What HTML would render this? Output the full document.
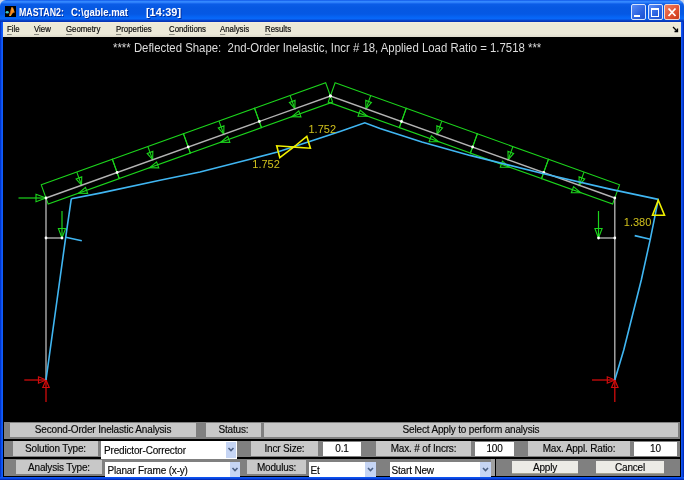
<!DOCTYPE html>
<html><head><meta charset="utf-8">
<style>
html{background:#c8d4ec;}
html,body{margin:0;padding:0;}
.gs{will-change:transform;}
body{width:684px;height:480px;overflow:hidden;position:relative;will-change:transform;background:transparent;font-family:"Liberation Sans",sans-serif;}
.a{position:absolute;}
#title{left:0;top:0;width:684px;height:22px;border-radius:6px 6px 0 0;background:linear-gradient(to bottom,#0c4ee0 0px,#2a80ff 1px,#3c90ff 2px,#1e6ef4 3px,#0a5ce6 4.5px,#0658e2 8px,#0558e4 14px,#0664f4 17px,#0868fa 19px,#0848d0 20px,#0636b8 21.5px,#0a3cc0 22px);}
.tt{top:6px;color:#fff;font-weight:bold;font-size:10.5px;line-height:12px;transform-origin:0 0;white-space:pre;text-shadow:1px 1px 0 #0030a0;}
#menu{left:3px;top:22px;width:678px;height:15px;background:linear-gradient(to bottom,#f6eedd 0px,#ece9d8 2px,#ece9d8 12px,#dedbcd 15px);}
.mi{top:23.5px;font-size:8.8px;line-height:11px;color:#000;white-space:pre;transform:scaleX(0.89);transform-origin:0 0;}
.mi u{text-decoration:underline;text-decoration-color:#8a8a80;text-underline-offset:1.5px;}
#plot{left:4px;top:37px;width:676px;height:384px;background:#000;}
#panel{left:3px;top:421px;width:678px;height:56px;background:#000;}
.fr{background:#808080;}
.bt{background:#c8c8c8;color:#111;font-size:10px;letter-spacing:-0.17px;text-align:center;white-space:pre;overflow:hidden;}
.ed{background:#fff;color:#111;font-size:10px;letter-spacing:-0.17px;text-align:center;white-space:pre;overflow:hidden;}
.pp{background:#fff;color:#111;font-size:10px;letter-spacing:-0.17px;text-align:left;white-space:pre;overflow:hidden;}
.ar{background:#c6d5f4;}
.xb{background:#ecebe6;color:#111;font-size:10px;letter-spacing:-0.17px;text-align:center;white-space:pre;border-bottom:1px solid #a4a290;}
svg{position:absolute;left:0;top:0;}
.bt,.ed,.pp,.xb{color:#000;-webkit-text-stroke:0.15px #222;}
.mi{-webkit-text-stroke:0.2px #222;}
</style></head><body>
<div class="a" style="left:0;top:8px;width:3px;height:472px;background:linear-gradient(to right,#0028b8,#0a50f0 50%,#1462ff);"></div>
<div class="a" style="left:681px;top:8px;width:3px;height:472px;background:linear-gradient(to left,#0020a8,#0846e0 50%,#1058f8);"></div>
<div class="a" style="left:0;top:477px;width:684px;height:3px;background:linear-gradient(to top,#0020a8,#0846e0 50%,#1058f8);"></div>
<div class="a" style="left:3px;top:37px;width:678px;height:440px;background:#000;"></div>
<div class="a" id="title"></div>
<div class="a" style="left:5px;top:6px;width:11px;height:11px;background:#000;"></div>
<svg width="684" height="480" style="pointer-events:none">
<ellipse cx="7.2" cy="12.2" rx="1.6" ry="1.2" fill="#40c8c8"/>
<polygon points="11.5,7 13,7.5 14.8,12.5 13,12.8 10.8,16 9,15.8" fill="#f08a20"/>
<polygon points="9,15.8 11,10 10.5,13" fill="#a02010"/>
<polygon points="9.2,15.6 10.5,14.2 10.8,16" fill="#f8c828"/>
<polygon points="12.5,8 13.3,10 12,11" fill="#ffb040"/>
</svg>
<div class="a tt" style="left:19px;transform:scaleX(0.84)">MASTAN2:</div><div class="a tt" style="left:71px;transform:scaleX(0.905)">C:\gable.mat</div><div class="a tt" style="left:146px;transform:scaleX(1.035)">[14:39]</div>
<div class="a" style="left:631px;top:4px;width:15px;height:16px;border:1px solid #d8e4fc;border-radius:2px;background:linear-gradient(135deg,#5a8cf6,#2a62e0 60%,#1c50d0);box-sizing:border-box;"></div>
<div class="a" style="left:634px;top:15px;width:6px;height:2px;background:#fff;"></div>
<div class="a" style="left:648px;top:4px;width:15px;height:16px;border:1px solid #d8e4fc;border-radius:2px;background:linear-gradient(135deg,#5a8cf6,#2a62e0 60%,#1c50d0);box-sizing:border-box;"></div>
<div class="a" style="left:651px;top:8px;width:8px;height:9px;border:1px solid #fff;border-top-width:2px;box-sizing:border-box;"></div>
<div class="a" style="left:664px;top:4px;width:16px;height:16px;border:1px solid #f0d8d0;border-radius:2px;background:linear-gradient(135deg,#f08060,#e05030 60%,#c83818);box-sizing:border-box;"></div>
<svg width="684" height="480"><path d="M668.5,8.5 L675.5,16 M675.5,8.5 L668.5,16" stroke="#fff" stroke-width="1.8"/></svg>
<div class="a" id="menu"></div>
<div class="a mi" style="left:7px"><u>F</u>ile</div>
<div class="a mi" style="left:34px"><u>V</u>iew</div>
<div class="a mi" style="left:66px"><u>G</u>eometry</div>
<div class="a mi" style="left:116px"><u>P</u>roperties</div>
<div class="a mi" style="left:169px"><u>C</u>onditions</div>
<div class="a mi" style="left:220px"><u>A</u>nalysis</div>
<div class="a mi" style="left:265px"><u>R</u>esults</div>
<svg width="684" height="480"><path d="M673,27 L677.5,31.5 M677.5,28.5 L677.5,31.5 L674.5,31.5" stroke="#000" stroke-width="1.3" fill="none"/></svg>
<div class="a" id="plot"></div>
<div class="a" id="ptitle" style="left:113px;top:41px;color:#dcdcdc;font-size:12.5px;white-space:pre;transform:scaleX(0.911);transform-origin:0 0;">**** Deflected Shape:  2nd-Order Inelastic, Incr # 18, Applied Load Ratio = 1.7518 ***</div>
<svg width="684" height="480" style="will-change:transform">
<polygon points="41.27,184.82 112.37,159.32 119.29,178.62 48.19,204.12" stroke="#1cd41c" stroke-width="1.1" fill="none" stroke-linejoin="miter"/>
<line x1="76.82" y1="172.07" x2="81.55" y2="185.25" stroke="#1cd41c" stroke-width="1.1"/>
<polygon points="81.55,185.25 76.09,178.92 81.74,176.90" stroke="#1cd41c" stroke-width="1.1" fill="none" stroke-linejoin="miter"/>
<polygon points="78.57,193.23 85.49,187.34 87.65,193.37" stroke="#1cd41c" stroke-width="1.1" fill="none" stroke-linejoin="miter"/>
<polygon points="112.37,159.32 183.47,133.82 190.39,153.12 119.29,178.62" stroke="#1cd41c" stroke-width="1.1" fill="none" stroke-linejoin="miter"/>
<line x1="147.92" y1="146.57" x2="152.65" y2="159.75" stroke="#1cd41c" stroke-width="1.1"/>
<polygon points="152.65,159.75 147.19,153.42 152.84,151.40" stroke="#1cd41c" stroke-width="1.1" fill="none" stroke-linejoin="miter"/>
<polygon points="149.67,167.73 156.59,161.84 158.75,167.87" stroke="#1cd41c" stroke-width="1.1" fill="none" stroke-linejoin="miter"/>
<polygon points="183.47,133.82 254.57,108.32 261.49,127.62 190.39,153.12" stroke="#1cd41c" stroke-width="1.1" fill="none" stroke-linejoin="miter"/>
<line x1="219.02" y1="121.07" x2="223.75" y2="134.25" stroke="#1cd41c" stroke-width="1.1"/>
<polygon points="223.75,134.25 218.29,127.92 223.94,125.90" stroke="#1cd41c" stroke-width="1.1" fill="none" stroke-linejoin="miter"/>
<polygon points="220.77,142.23 227.69,136.34 229.85,142.37" stroke="#1cd41c" stroke-width="1.1" fill="none" stroke-linejoin="miter"/>
<polygon points="254.57,108.32 325.67,82.82 332.59,102.12 261.49,127.62" stroke="#1cd41c" stroke-width="1.1" fill="none" stroke-linejoin="miter"/>
<line x1="290.12" y1="95.57" x2="294.85" y2="108.75" stroke="#1cd41c" stroke-width="1.1"/>
<polygon points="294.85,108.75 289.39,102.42 295.04,100.40" stroke="#1cd41c" stroke-width="1.1" fill="none" stroke-linejoin="miter"/>
<polygon points="291.87,116.73 298.79,110.84 300.95,116.87" stroke="#1cd41c" stroke-width="1.1" fill="none" stroke-linejoin="miter"/>
<polygon points="335.13,82.82 406.23,108.32 399.31,127.62 328.21,102.12" stroke="#1cd41c" stroke-width="1.1" fill="none" stroke-linejoin="miter"/>
<line x1="370.68" y1="95.57" x2="365.95" y2="108.75" stroke="#1cd41c" stroke-width="1.1"/>
<polygon points="365.95,108.75 365.76,100.40 371.41,102.42" stroke="#1cd41c" stroke-width="1.1" fill="none" stroke-linejoin="miter"/>
<polygon points="367.14,116.08 358.06,116.23 360.22,110.20" stroke="#1cd41c" stroke-width="1.1" fill="none" stroke-linejoin="miter"/>
<polygon points="406.23,108.32 477.33,133.82 470.41,153.12 399.31,127.62" stroke="#1cd41c" stroke-width="1.1" fill="none" stroke-linejoin="miter"/>
<line x1="441.78" y1="121.07" x2="437.05" y2="134.25" stroke="#1cd41c" stroke-width="1.1"/>
<polygon points="437.05,134.25 436.86,125.90 442.51,127.92" stroke="#1cd41c" stroke-width="1.1" fill="none" stroke-linejoin="miter"/>
<polygon points="438.24,141.58 429.16,141.73 431.32,135.70" stroke="#1cd41c" stroke-width="1.1" fill="none" stroke-linejoin="miter"/>
<polygon points="477.33,133.82 548.43,159.32 541.51,178.62 470.41,153.12" stroke="#1cd41c" stroke-width="1.1" fill="none" stroke-linejoin="miter"/>
<line x1="512.88" y1="146.57" x2="508.15" y2="159.75" stroke="#1cd41c" stroke-width="1.1"/>
<polygon points="508.15,159.75 507.96,151.40 513.61,153.42" stroke="#1cd41c" stroke-width="1.1" fill="none" stroke-linejoin="miter"/>
<polygon points="509.34,167.08 500.26,167.23 502.42,161.20" stroke="#1cd41c" stroke-width="1.1" fill="none" stroke-linejoin="miter"/>
<polygon points="548.43,159.32 619.53,184.82 612.61,204.12 541.51,178.62" stroke="#1cd41c" stroke-width="1.1" fill="none" stroke-linejoin="miter"/>
<line x1="583.98" y1="172.07" x2="579.25" y2="185.25" stroke="#1cd41c" stroke-width="1.1"/>
<polygon points="579.25,185.25 579.06,176.90 584.71,178.92" stroke="#1cd41c" stroke-width="1.1" fill="none" stroke-linejoin="miter"/>
<polygon points="580.44,192.58 571.36,192.73 573.52,186.70" stroke="#1cd41c" stroke-width="1.1" fill="none" stroke-linejoin="miter"/>
<line x1="18.50" y1="198.00" x2="46.00" y2="198.00" stroke="#1cd41c" stroke-width="1.2"/>
<polygon points="46.00,198.00 36.00,201.80 36.00,194.20" stroke="#1cd41c" stroke-width="1.1" fill="none" stroke-linejoin="miter"/>
<line x1="62.00" y1="211.00" x2="62.00" y2="238.00" stroke="#1cd41c" stroke-width="1.2"/>
<polygon points="62.00,238.00 58.40,228.50 65.60,228.50" stroke="#1cd41c" stroke-width="1.1" fill="none" stroke-linejoin="miter"/>
<line x1="598.50" y1="211.00" x2="598.50" y2="238.00" stroke="#1cd41c" stroke-width="1.2"/>
<polygon points="598.50,238.00 594.90,228.50 602.10,228.50" stroke="#1cd41c" stroke-width="1.1" fill="none" stroke-linejoin="miter"/>
<line x1="46.00" y1="380.00" x2="46.00" y2="198.00" stroke="#b4b4b4" stroke-width="1.35"/>
<line x1="614.80" y1="380.00" x2="614.80" y2="198.00" stroke="#b4b4b4" stroke-width="1.35"/>
<line x1="46.00" y1="238.00" x2="62.00" y2="238.00" stroke="#b4b4b4" stroke-width="1.35"/>
<line x1="614.80" y1="238.00" x2="598.50" y2="238.00" stroke="#b4b4b4" stroke-width="1.35"/>
<polyline points="46.00,198.00 330.40,96.00 614.80,198.00" stroke="#b4b4b4" stroke-width="1.35" fill="none" stroke-linejoin="miter"/>
<circle cx="46.00" cy="198.00" r="1.4" fill="#ffffff"/>
<circle cx="117.10" cy="172.50" r="1.4" fill="#ffffff"/>
<circle cx="188.20" cy="147.00" r="1.4" fill="#ffffff"/>
<circle cx="259.30" cy="121.50" r="1.4" fill="#ffffff"/>
<circle cx="330.40" cy="96.00" r="1.4" fill="#ffffff"/>
<circle cx="330.40" cy="96.00" r="1.4" fill="#ffffff"/>
<circle cx="401.50" cy="121.50" r="1.4" fill="#ffffff"/>
<circle cx="472.60" cy="147.00" r="1.4" fill="#ffffff"/>
<circle cx="543.70" cy="172.50" r="1.4" fill="#ffffff"/>
<circle cx="614.80" cy="198.00" r="1.4" fill="#ffffff"/>
<circle cx="46.00" cy="238.00" r="1.4" fill="#ffffff"/>
<circle cx="62.00" cy="238.00" r="1.4" fill="#ffffff"/>
<circle cx="614.80" cy="238.00" r="1.4" fill="#ffffff"/>
<circle cx="598.50" cy="238.00" r="1.4" fill="#ffffff"/>
<line x1="24.30" y1="380.00" x2="46.00" y2="380.00" stroke="#d00c0c" stroke-width="1.3"/>
<polygon points="46.00,380.00 38.50,383.20 38.50,376.80" stroke="#d00c0c" stroke-width="1.2" fill="none" stroke-linejoin="miter"/>
<line x1="46.00" y1="380.00" x2="46.00" y2="402.00" stroke="#d00c0c" stroke-width="1.3"/>
<polygon points="46.00,380.00 49.20,387.50 42.80,387.50" stroke="#d00c0c" stroke-width="1.2" fill="none" stroke-linejoin="miter"/>
<line x1="592.00" y1="380.00" x2="614.80" y2="380.00" stroke="#d00c0c" stroke-width="1.3"/>
<polygon points="614.80,380.00 607.30,383.20 607.30,376.80" stroke="#d00c0c" stroke-width="1.2" fill="none" stroke-linejoin="miter"/>
<line x1="614.80" y1="380.00" x2="614.80" y2="402.00" stroke="#d00c0c" stroke-width="1.3"/>
<polygon points="614.80,380.00 618.00,387.50 611.60,387.50" stroke="#d00c0c" stroke-width="1.2" fill="none" stroke-linejoin="miter"/>
<polyline points="46.00,380.00 65.70,237.30 71.30,198.70" stroke="#40b6f2" stroke-width="1.6" fill="none" stroke-linejoin="miter"/>
<polyline points="65.70,237.30 81.80,240.80" stroke="#40b6f2" stroke-width="1.6" fill="none" stroke-linejoin="miter"/>
<polyline points="71.30,198.70 100.00,193.10 160.00,180.20 200.00,172.00 250.00,159.20 277.50,151.90 318.00,138.80 340.00,131.40 364.80,122.80 380.00,128.40 421.90,142.00 470.00,155.40 543.70,173.80 610.00,189.10 658.30,199.40" stroke="#40b6f2" stroke-width="1.6" fill="none" stroke-linejoin="miter"/>
<polyline points="658.30,199.40 650.30,239.20 641.30,280.00 623.75,350.00 614.80,380.00" stroke="#40b6f2" stroke-width="1.6" fill="none" stroke-linejoin="miter"/>
<polyline points="650.30,239.20 634.70,235.60" stroke="#40b6f2" stroke-width="1.6" fill="none" stroke-linejoin="miter"/>
<polygon points="293.80,147.00 276.70,145.80 279.80,157.70" stroke="#f0f000" stroke-width="1.6" fill="none" stroke-linejoin="miter"/>
<polygon points="293.80,147.00 306.80,136.30 310.40,148.20" stroke="#f0f000" stroke-width="1.6" fill="none" stroke-linejoin="miter"/>
<polygon points="658.30,200.30 652.50,215.30 664.50,215.30" stroke="#f0f000" stroke-width="1.6" fill="none" stroke-linejoin="miter"/>
<text x="308.5" y="133.3" fill="#d0c01c" font-size="11" font-family="Liberation Sans, sans-serif">1.752</text>
<text x="252.3" y="168.4" fill="#d0c01c" font-size="11" font-family="Liberation Sans, sans-serif">1.752</text>
<text x="623.8" y="226.4" fill="#d0c01c" font-size="11" font-family="Liberation Sans, sans-serif">1.380</text>
</svg>
<div class="a" id="panel"></div>
<!-- row 1 -->
<div class="a fr" style="left:4px;top:422px;width:676px;height:17px;"></div>
<div class="a bt" style="left:10px;top:423px;width:186px;height:14px;line-height:14px;">Second-Order Inelastic Analysis</div>
<div class="a bt" style="left:206px;top:423px;width:55px;height:14px;line-height:14px;">Status:</div>
<div class="a bt" style="left:264px;top:423px;width:414px;height:14px;line-height:14px;">Select Apply to perform analysis</div>
<!-- row 2 -->
<div class="a fr" style="left:4px;top:441px;width:676px;height:16px;"></div>
<div class="a bt" style="left:13px;top:441px;width:85px;height:15px;line-height:15px;">Solution Type:</div>
<div class="a pp" style="left:101px;top:441px;width:136px;height:18px;line-height:19px;padding-left:3px;box-sizing:border-box;">Predictor-Corrector</div>
<div class="a ar" style="left:226px;top:442px;width:10px;height:16px;"></div>
<div class="a bt" style="left:251px;top:441px;width:67px;height:15px;line-height:15px;">Incr Size:</div>
<div class="a ed" style="left:323px;top:442px;width:38px;height:14px;line-height:14px;">0.1</div>
<div class="a bt" style="left:376px;top:441px;width:95px;height:15px;line-height:15px;">Max. # of Incrs:</div>
<div class="a ed" style="left:475px;top:442px;width:39px;height:14px;line-height:14px;">100</div>
<div class="a bt" style="left:528px;top:441px;width:102px;height:15px;line-height:15px;">Max. Appl. Ratio:</div>
<div class="a ed" style="left:634px;top:442px;width:43px;height:14px;line-height:14px;">10</div>
<!-- row 3 -->
<div class="a fr" style="left:4px;top:459px;width:676px;height:17px;"></div>
<div class="a bt" style="left:16px;top:460px;width:86px;height:14px;line-height:16.5px;">Analysis Type:</div>
<div class="a pp" style="left:105px;top:462px;width:135px;height:15px;line-height:18.5px;padding-left:2.5px;box-sizing:border-box;">Planar Frame (x-y)</div>
<div class="a ar" style="left:230px;top:462px;width:10px;height:15px;"></div>
<div class="a bt" style="left:247px;top:460px;width:59px;height:14px;line-height:16.5px;">Modulus:</div>
<div class="a pp" style="left:309px;top:462px;width:67px;height:15px;line-height:18.5px;padding-left:1.5px;box-sizing:border-box;">Et</div>
<div class="a ar" style="left:365px;top:462px;width:11px;height:15px;"></div>
<div class="a pp" style="left:390px;top:462px;width:101px;height:15px;line-height:18.5px;padding-left:1.5px;box-sizing:border-box;">Start New</div>
<div class="a ar" style="left:480px;top:462px;width:11px;height:15px;"></div>
<div class="a" style="left:491px;top:459px;width:4px;height:17px;background:#a0a0a0;"></div>
<div class="a" style="left:495px;top:459px;width:1px;height:17px;background:#000;"></div>
<div class="a xb" style="left:512px;top:461px;width:66px;height:12px;line-height:13.5px;">Apply</div>
<div class="a xb" style="left:596px;top:461px;width:68px;height:12px;line-height:13.5px;">Cancel</div>
<svg width="684" height="480"><g stroke="#4d6185" stroke-width="1.6" fill="none">
<path d="M228.5,448 L231,450.5 L233.5,448"/>
<path d="M232.5,468 L235,470.5 L237.5,468"/>
<path d="M368,468 L370.5,470.5 L373,468"/>
<path d="M483,468 L485.5,470.5 L488,468"/>
</g></svg>
</body></html>
